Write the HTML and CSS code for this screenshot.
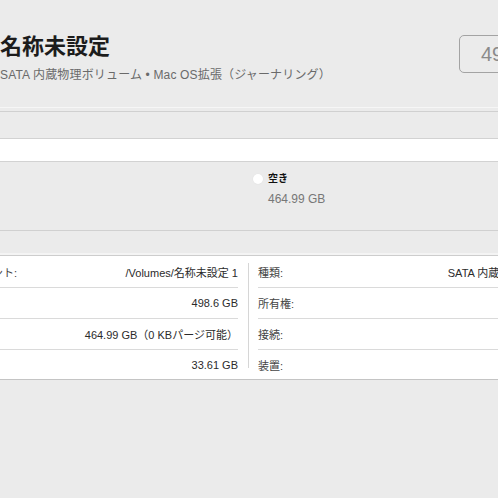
FILE: index.html
```html
<!DOCTYPE html>
<html lang="ja">
<head>
<meta charset="utf-8">
<title>名称未設定</title>
<link rel="stylesheet" href="styles.css">
</head>
<body>
<div class="page">
  <header class="head">
    <div class="titles">
      <h1 class="title">名称未設定</h1>
      <p class="subtitle">SATA 内蔵物理ボリューム • Mac OS拡張（ジャーナリング）</p>
    </div>
    <div class="cap">498.6 GB</div>
  </header>
  <div class="sep"></div>
  <div class="usage">
    <div class="bar"></div>
  </div>
  <div class="legend">
    <div class="legend-item">
      <span class="dot"></span>
      <div class="legend-text">
        <span class="legend-label">空き</span>
        <span class="legend-value">464.99 GB</span>
      </div>
    </div>
  </div>
  <div class="info">
    <div class="col col-left">
      <div class="row"><span class="label">マウントポイント:</span><span class="value">/Volumes/名称未設定 1</span></div>
      <div class="row"><span class="label">容量:</span><span class="value">498.6 GB</span></div>
      <div class="row"><span class="label">使用可能:</span><span class="value">464.99 GB（0 KBパージ可能）</span></div>
      <div class="row last"><span class="label">使用済み:</span><span class="value">33.61 GB</span></div>
    </div>
    <div class="vdiv"></div>
    <div class="col col-right">
      <div class="row"><span class="label">種類:</span><span class="value">SATA 内蔵物理ボリューム</span></div>
      <div class="row"><span class="label">所有権:</span><span class="value">無効</span></div>
      <div class="row"><span class="label">接続:</span><span class="value">SATA</span></div>
      <div class="row last"><span class="label">装置:</span><span class="value">disk1s2</span></div>
    </div>
  </div>
</div>
</body>
</html>
```

FILE: styles.css
```css
html, body {
  margin: 0;
  padding: 0;
  background: #ebebeb;
  overflow: hidden;
}
body {
  font-family: "Liberation Sans", "Noto Sans CJK JP", sans-serif;
  color: #222;
  width: 498px;
  height: 498px;
}
.page {
  width: 498px;
}
.head {
  display: flex;
  align-items: flex-start;
  padding: 34px 0 24px 0;
  margin-right: -62px;
  border-bottom: 1px solid #f6f6f6;
}
.titles {
  flex: 1;
}
.title {
  margin: 0;
  font-size: 22px;
  line-height: 26px;
  font-weight: bold;
  color: #1c1c1c;
}
.subtitle {
  margin: 7px 0 0 0;
  font-size: 12px;
  line-height: 16px;
  letter-spacing: 0.16px;
  color: #6a6a6a;
  white-space: nowrap;
}
.cap {
  width: 78px;
  height: 36px;
  margin-top: 1px;
  padding-left: 21px;
  border: 1px solid #a3a3a3;
  border-radius: 5px;
  font-size: 20px;
  line-height: 36px;
  color: #8a8a8a;
  white-space: nowrap;
  overflow: hidden;
}
.sep {
  margin-top: 3px;
  border-top: 1px solid #d0d0d0;
}
.usage {
  padding-top: 26px;
}
.bar {
  height: 22px;
  background: #ffffff;
  border-top: 1px solid #d2d2d2;
  border-bottom: 1px solid #d2d2d2;
}
.legend {
  padding: 12px 0 0 253px;
  height: 56px;
  border-bottom: 1px solid #d0d0d0;
}
.legend-item {
  display: flex;
  align-items: flex-start;
  gap: 5px;
}
.dot {
  width: 10px;
  height: 10px;
  border-radius: 50%;
  background: #ffffff;
  box-shadow: 0 0 0 0.5px #e4e4e4;
}
.legend-text {
  display: flex;
  flex-direction: column;
  margin-top: -2px;
}
.legend-label {
  font-size: 10px;
  line-height: 14px;
  font-weight: bold;
  color: #111;
}
.legend-value {
  margin-top: 6px;
  font-size: 12px;
  line-height: 14px;
  color: #777;
}
.info {
  display: flex;
  margin-top: 24px;
  margin-left: -80px;
  width: 656px;
  background: #ffffff;
  border-top: 1px solid #cdcdcd;
  border-bottom: 1px solid #c4c4c4;
  padding-top: 1px;
  box-shadow: 0 -3px 0 -1px #f4f4f4;
}
.col {
  display: flex;
  flex-direction: column;
}
.col-left {
  width: 312px;
  padding-left: 6px;
}
.col-right {
  width: 318px;
}
.vdiv {
  width: 1px;
  background: #d6d6d6;
  margin: 6px 9px 11px 10px;
}
.row {
  display: flex;
  justify-content: space-between;
  align-items: center;
  height: 30px;
  border-bottom: 1px solid #dadada;
  font-size: 11px;
  white-space: nowrap;
}
.row.last {
  height: 29px;
  border-bottom: none;
}
.label {
  color: #444;
}
.value {
  color: #2b2b2b;
}
```
